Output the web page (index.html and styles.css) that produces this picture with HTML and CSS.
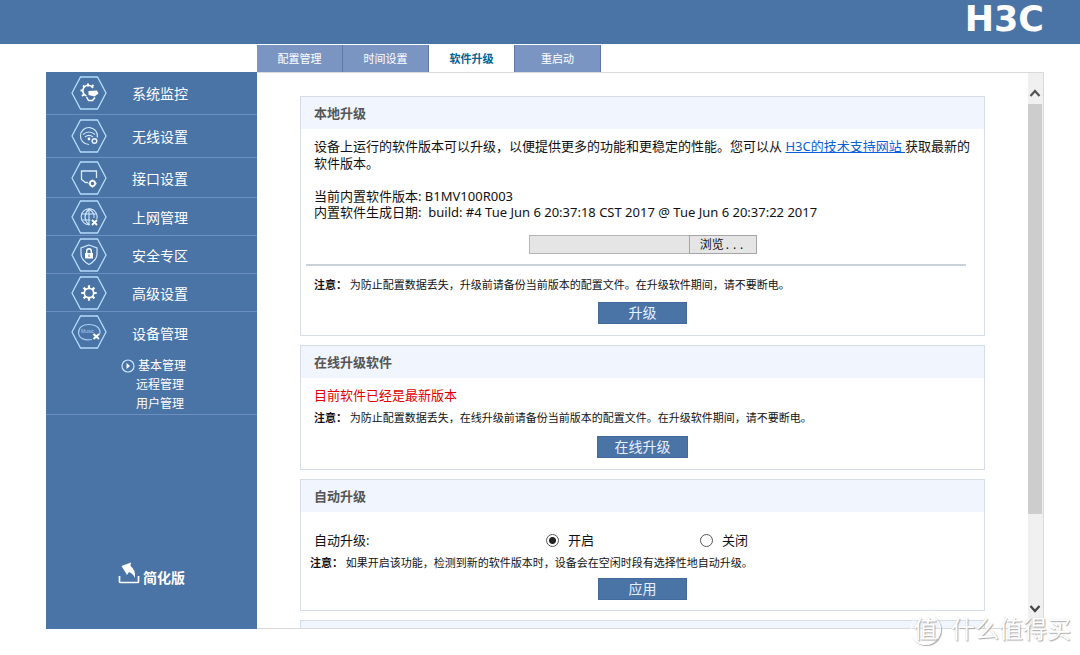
FILE: index.html
```html
<!DOCTYPE html>
<html lang="zh-CN">
<head>
<meta charset="utf-8">
<title>H3C 软件升级</title>
<link rel="stylesheet" href="styles.css">
</head>
<body>
<svg class="defs" aria-hidden="true">
  <symbol id="hex" viewBox="0 0 36 34"><path d="M9.500 1H26.500L35 17L26.500 33H9.500L1 17Z" fill="none" stroke="#b5dcfb" stroke-width="1.300"/></symbol>
  <symbol id="gear" viewBox="0 0 16 16"><circle cx="8" cy="8" r="4.700" fill="none" stroke="currentColor" stroke-width="1.700"/><path d="M8 .3V3M8 13v2.700M.3 8H3M13 8h2.700M2.600 2.600l1.900 1.900M11.500 11.500l1.900 1.900M2.600 13.400l1.900-1.900M11.500 4.500l1.900-1.900" stroke="currentColor" stroke-width="2.200"/></symbol>
</svg>
<header class="topbar"><span class="logo">H3C</span></header>
<div class="layout">
  <aside class="sidebar">
    <nav class="menu">
      <a class="item tall" href="#"><svg class="icon" viewBox="0 0 36 34"><use href="#hex"/><path d="M22 12a5.500 5.500 0 1 0-6.500 8" fill="none" stroke="#fff" stroke-width="1.600"/><path d="M17 7.500v3M12 9.500l2 2M22.500 9l-2 2M9.500 14.500h3M11 20l2.500-2" stroke="#fff" stroke-width="2"/><path d="M17.500 15l8.500-.5 1.500 3-4 3-6-1.500z" fill="#fff"/><path d="M15.500 21l2 3.500h4l2.500-3" fill="none" stroke="#fff" stroke-width="1.500"/></svg><span>系统监控</span></a>
      <a class="item tall" href="#"><svg class="icon" viewBox="0 0 36 34"><use href="#hex"/><g fill="none" stroke="#cfe8ff" stroke-width="1.200"><path d="M18 25.500a8.500 8.500 0 1 1 8.300-7"/><path d="M12 15.500q6-5 12 0M14 18q4-3.200 8 0"/></g><circle cx="18" cy="20" r="1.400" fill="#fff"/><circle cx="23.500" cy="22" r="2.300" fill="#4a73a6" stroke="#e6f3ff" stroke-width="1.500"/></svg><span>无线设置</span></a>
      <a class="item medium" href="#"><svg class="icon" viewBox="0 0 36 34"><use href="#hex"/><path d="M17 21.500h-2.500l-4-3V10h15v7" fill="none" stroke="#d6ecff" stroke-width="1.300"/><circle cx="21.500" cy="22.500" r="2.600" fill="none" stroke="#fff" stroke-width="1.700"/><path d="M21.500 18.500v1M21.500 25.500v1M17.500 22.500h1M24.500 22.500h1" stroke="#fff" stroke-width="1.500"/></svg><span>接口设置</span></a>
      <a class="item" href="#"><svg class="icon" viewBox="0 0 36 34"><use href="#hex"/><g fill="none" stroke="#cfe8ff" stroke-width="1.100"><path d="M19 24.700a8 8 0 1 1 6.800-5.700"/><path d="M18 9v16M10.500 14h15M10.500 20h9M18 9q-8 8 0 16M18 9q6 4 5 9"/></g><path d="M21 20l5 5M26 20l-5 5" stroke="#fff" stroke-width="1.800"/></svg><span>上网管理</span></a>
      <a class="item" href="#"><svg class="icon" viewBox="0 0 36 34"><use href="#hex"/><path d="M18 7l8 3v6q0 6-8 10.500Q10 22 10 16v-6z" fill="none" stroke="#cfe8ff" stroke-width="1.200"/><path d="M14 15h8v5.500h-8z" fill="#fff"/><path d="M15.700 15v-2a2.300 2.300 0 0 1 4.600 0v2" fill="none" stroke="#fff" stroke-width="1.400"/><path d="M18 16.500v2.500" stroke="#4a73a6"/></svg><span>安全专区</span></a>
      <a class="item" href="#"><svg class="icon" viewBox="0 0 36 34"><use href="#hex"/><svg x="10" y="9" width="16" height="16" color="#fff"><use href="#gear"/></svg></svg><span>高级设置</span></a>
      <div class="group">
        <a class="item medium open" href="#"><svg class="icon" viewBox="0 0 36 34"><use href="#hex"/><path d="M21 24.500c-7 1.500-13-1-13.500-6.500C7.500 12 12 9.500 18 9.500S29 12.500 29 17q0 1.500-1 3" fill="none" stroke="#a8d0f3" stroke-width="1.200"/><text x="10" y="17.500" class="mini">Music</text><path d="M22.500 19l5.500 5M28 19l-5.500 5" stroke="#fff" stroke-width="2"/></svg><span>设备管理</span></a>
        <div class="submenu">
          <a class="current" href="#"><svg class="arrow" viewBox="0 0 14 14"><circle cx="7" cy="7" r="6" fill="none" stroke="#cfe8ff" stroke-width="1.200"/><path d="M5.500 4l3.500 3-3.500 3z" fill="#fff"/></svg>基本管理</a>
          <a href="#">远程管理</a>
          <a href="#">用户管理</a>
        </div>
      </div>
    </nav>
    <a class="simple" href="#"><svg viewBox="0 0 22 22"><path d="M1.500 14v5.500q0 1 1 1h17q1 0 1-1V14" fill="none" stroke="#fff" stroke-width="1.700"/><path d="M3.500 4L13 .5 12.500 4Q18 8 17 16q-2-4.500-6-6l-2 3z" fill="#fff"/></svg>简化版</a>
  </aside>
  <div class="main">
    <nav class="tabs">
      <a href="#">配置管理</a><a href="#">时间设置</a><a class="active" href="#">软件升级</a><a href="#">重启动</a>
    </nav>
    <div class="pane">
      <main class="content">
        <section class="card">
          <h2>本地升级</h2>
          <div class="body local">
            <p>设备上运行的软件版本可以升级，以便提供更多的功能和更稳定的性能。您可以从 <a href="#">H3C的技术支持网站 </a>获取最新的软件版本。</p>
            <p class="version">当前内置软件版本: B1MV100R003<br>内置软件生成日期:&nbsp; build: #4 Tue Jun 6 20:37:18 CST 2017 @ Tue Jun 6 20:37:22 2017</p>
            <div class="file"><input type="text" aria-label="升级文件" readonly><button type="button">浏览...</button></div>
            <hr>
            <p class="note"><b>注意：</b> 为防止配置数据丢失，升级前请备份当前版本的配置文件。在升级软件期间，请不要断电。</p>
            <button class="action" type="button">升级</button>
          </div>
        </section>
        <section class="card">
          <h2>在线升级软件</h2>
          <div class="body">
            <p class="status">目前软件已经是最新版本</p>
            <p class="note"><b>注意：</b> 为防止配置数据丢失，在线升级前请备份当前版本的配置文件。在升级软件期间，请不要断电。</p>
            <button class="action wide" type="button">在线升级</button>
          </div>
        </section>
        <section class="card">
          <h2>自动升级</h2>
          <div class="body auto">
            <div class="choices">
              <span id="auto-label">自动升级:</span>
              <div class="radios" role="radiogroup" aria-labelledby="auto-label">
                <label><input type="radio" name="auto" checked>开启</label>
                <label><input type="radio" name="auto">关闭</label>
              </div>
            </div>
            <p class="note"><b>注意：</b> 如果开启该功能，检测到新的软件版本时，设备会在空闲时段有选择性地自动升级。</p>
            <button class="action" type="button">应用</button>
          </div>
        </section>
        <section class="card"><div class="next"></div></section>
      </main>
      <div class="scrollbar">
        <svg viewBox="0 0 14 10"><path d="M2.500 8L7 3l4.500 5" fill="none" stroke="#555" stroke-width="2.200"/></svg>
        <div class="track"><div class="thumb"></div></div>
        <svg viewBox="0 0 14 10"><path d="M2.500 2L7 7l4.500-5" fill="none" stroke="#444" stroke-width="2.200"/></svg>
      </div>
    </div>
  </div>
</div>
<div class="watermark"><span class="seal">值</span><span>什么值得买</span></div>
</body>
</html>
```
FILE: styles.css
```css
* { box-sizing: border-box; }
body {
  margin: 0;
  height: 100vh;
  display: flex;
  flex-direction: column;
  overflow: hidden;
  background: #fff;
  color: #111;
  font: 13px/17px "Noto Sans", "Noto Sans CJK SC", sans-serif;
}
a { color: inherit; text-decoration: none; }
p, h2 { margin: 0; }
.defs { display: none; }

.topbar {
  flex: none;
  height: 44px;
  padding: 0 36px;
  display: flex;
  justify-content: flex-end;
  background: #4a73a6;
}
.logo { color: #fff; font: bold 35px/38px "DejaVu Sans", sans-serif; }

.layout {
  flex: 1;
  min-height: 0;
  display: flex;
  padding: 1px 36px 26px 46px;
}
.sidebar {
  flex: none;
  width: 211px;
  margin-top: 27px;
  display: flex;
  flex-direction: column;
  justify-content: space-between;
  background: #4a73a6;
  color: #fff;
}
.menu { display: flex; flex-direction: column; }
.item {
  height: 38px;
  padding-left: 25px;
  display: flex;
  align-items: center;
  gap: 25px;
  border-bottom: 1px solid #6a8fc0;
  font-size: 14px;
}
.item span { padding-top: 1px; }
.tall { height: 43px; }
.medium { height: 40px; }
.icon { flex: none; width: 36px; height: 34px; }
.mini { font: 5px "Liberation Sans", sans-serif; fill: #a8d0f3; }
.group { border-bottom: 1px solid #6a8fc0; padding-bottom: 1px; }
.open { border-bottom: 0; }
.open span { padding-top: 3px; }
.submenu {
  display: flex;
  flex-direction: column;
  padding: 4px 0 0 90px;
  font-size: 12px;
  line-height: 19px;
}
.submenu .current { display: flex; align-items: center; gap: 3px; margin-left: -15px; }
.arrow { width: 14px; height: 14px; }
.simple {
  display: flex;
  align-items: flex-end;
  gap: 3px;
  padding: 0 0 43px 72px;
  font-size: 14px;
  font-weight: bold;
}
.simple svg { width: 22px; height: 22px; margin-bottom: 2px; }

.main { flex: 1; min-width: 0; display: flex; flex-direction: column; }
.tabs { display: flex; height: 27px; flex: none; }
.tabs a {
  width: 86px;
  background: #7b95c3;
  border-right: 1px solid #5d77a6;
  color: #fff;
  font-size: 11px;
  line-height: 27px;
  text-align: center;
}
.tabs .active { background: #fff; color: #006394; font-weight: bold; }
.pane {
  flex: 1;
  min-height: 0;
  display: flex;
  border: 1px solid #dadada;
  border-left: 0;
}
.content {
  flex: 1;
  min-width: 0;
  overflow: hidden;
  padding: 23px 43px 0;
  display: flex;
  flex-direction: column;
  gap: 9px;
}
.card { flex: none; border: 1px solid #d5dde8; }
.card h2 {
  background: #f1f5fe;
  color: #555;
  padding-left: 13px;
  font-size: 13px;
  line-height: 32px;
}
.next { height: 32px; background: #f1f5fe; }
.body { padding: 9px 5px 11px; display: flex; flex-direction: column; }
.body p { padding: 0 8px; }
.body p a { color: #0a5fd9; text-decoration: underline; }
.version { margin-top: 16px; line-height: 16px; }
.file { display: flex; align-self: center; margin-top: 15px; height: 19px; }
.file input { width: 160px; background: #e5e5e5; border: 1px solid #b5b5b5; border-right: 0; }
.file button {
  width: 68px;
  padding: 0;
  background: #e5e5e5;
  border: 1px solid #a5a5a5;
  color: #111;
  font: 12px/16px "Noto Sans Mono", "Noto Sans CJK SC", sans-serif;
}
hr { width: auto; height: 2px; margin: 10px 13px 0 0; border: 0; background: #c8d2d8; }
.body .note { font-size: 11px; line-height: 16px; margin-top: 6px; }
.local .note { margin-top: 11px; }
.status { color: #e00000; }
.action {
  align-self: center;
  width: 89px;
  height: 22px;
  margin-top: 9px;
  padding: 0;
  border: 1px solid #426a9e;
  background: #4a73a6;
  color: #e6f0ff;
  font: 14px/18px "Noto Sans", "Noto Sans CJK SC", sans-serif;
}
.wide { width: 91px; margin-top: 10px; }
.auto { padding-top: 20px; padding-bottom: 10px; }
.body.auto .note { padding: 0 4px; }
.auto .action { margin-top: 7px; }
.choices { display: flex; padding-left: 8px; }
.choices > span { width: 232px; }
.radios { display: flex; gap: 106px; }
.radios label { display: flex; align-items: center; gap: 9px; }
.radios input {
  appearance: none;
  width: 13px;
  height: 13px;
  margin: 0;
  border: 1px solid #555;
  border-radius: 50%;
  background: #fff;
}
.radios input:checked { background: radial-gradient(circle, #222 3px, #fff 4px); }

.scrollbar {
  width: 15px;
  padding: 14px 0 13px;
  display: flex;
  flex-direction: column;
  gap: 5px;
  background: #f0f0f0;
}
.scrollbar svg { flex: none; width: 14px; height: 12px; }
.track { flex: 1; padding-right: 1px; }
.thumb { height: 83%; background: #cdcdcd; }

.watermark {
  position: absolute;
  right: 9px;
  bottom: 9px;
  display: flex;
  align-items: center;
  gap: 10px;
  color: #fff;
  font-size: 24px;
  line-height: 34px;
  text-shadow: 1px 1px 1px #aaa, 0 0 1px #ccc;
}
.seal {
  width: 31px;
  height: 31px;
  border: 1px solid #fff;
  border-radius: 50%;
  box-shadow: 1px 1px 1px #aaa;
  line-height: 28px;
  text-align: center;
}
```
